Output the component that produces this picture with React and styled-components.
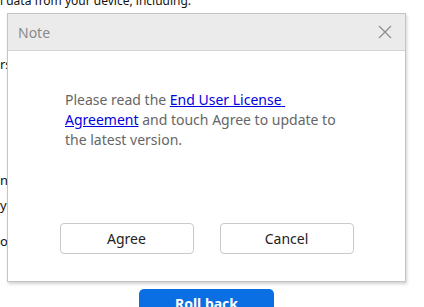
import React from "react";
import styled, { createGlobalStyle } from "styled-components";

const GlobalStyle = createGlobalStyle`
  html, body {
    margin: 0;
    padding: 0;
    background: #ffffff;
  }
  body {
    font-family: "Noto Sans", "Liberation Sans", sans-serif;
    width: 424px;
    height: 307px;
    overflow: hidden;
  }
`;

const Page = styled.div`
  position: relative;
  width: 424px;
  height: 307px;
  overflow: hidden;
  background: #fff;
`;

const BackText = styled.div`
  display: flex;
  flex-direction: column;
  font-size: 13px;
  color: #111;
  line-height: 16px;
`;

const TopLine = styled.div`
  margin-top: -7px;
  font-size: 12px;
  white-space: nowrap;
`;

const SideLine = styled.div`
  margin-top: ${(p) => p.gap}px;
  white-space: nowrap;
`;

const RollBack = styled.button`
  position: absolute;
  left: 139px;
  top: 289px;
  width: 135px;
  height: 34px;
  border: none;
  border-radius: 5px;
  background: #0a6fe2;
  color: #fff;
  font-family: "Noto Sans", "Liberation Sans", sans-serif;
  font-weight: 700;
  font-size: 14px;
  padding: 0;
  padding-top: 5px;
  display: flex;
  justify-content: center;
  align-items: flex-start;
`;

const Dialog = styled.div`
  position: absolute;
  left: 7px;
  top: 13px;
  width: 397px;
  height: 267px;
  border: 1px solid #c4c4c4;
  background: #fff;
  box-shadow: 1px 2px 3px rgba(0, 0, 0, 0.18);
  display: flex;
  flex-direction: column;
`;

const Header = styled.div`
  height: 36px;
  background: #ebebeb;
  border-bottom: 1px solid #d4d4d4;
  display: flex;
  align-items: center;
  justify-content: space-between;
  padding: 0 13px 0 10px;
`;

const Title = styled.div`
  font-size: 14px;
  color: #8a8a8a;
`;

const Close = styled.button`
  width: 14px;
  height: 14px;
  padding: 0;
  border: none;
  background: none;
  display: flex;
`;

const Body = styled.div`
  flex: 1;
  padding: 39px 20px 0 57px;
`;

const Message = styled.p`
  margin: 0;
  font-size: 14px;
  line-height: 20px;
  color: #666;
`;

const Link = styled.a`
  color: #0000e0;
  text-decoration: underline;
`;

const Actions = styled.div`
  display: flex;
  justify-content: center;
  gap: 26px;
  padding-bottom: 27px;
`;

const Btn = styled.button`
  width: 134px;
  height: 31px;
  border: 1px solid #c9c9c9;
  border-radius: 4px;
  background: #fff;
  font-family: "Noto Sans", "Liberation Sans", sans-serif;
  font-size: 14px;
  color: #222;
  padding: 0;
`;

export default function App() {
  return (
    <Page>
      <GlobalStyle />
      <BackText>
        <TopLine>l data from your device, including:</TopLine>
        <SideLine gap={47}>rs</SideLine>
        <SideLine gap={100}>n</SideLine>
        <SideLine gap={9}>ys</SideLine>
        <SideLine gap={20}>o</SideLine>
      </BackText>
      <RollBack>Roll back</RollBack>
      <Dialog>
        <Header>
          <Title>Note</Title>
          <Close aria-label="Close">
            <svg width="14" height="14" viewBox="0 0 14 14">
              <path d="M1 1 L13 13 M13 1 L1 13" stroke="#8c8c8c" strokeWidth="1.2" fill="none" />
            </svg>
          </Close>
        </Header>
        <Body>
          <Message>
            Please read the <Link href="#">End User License{"\u00a0"}</Link>
            <br />
            <Link href="#">Agreement</Link> and touch Agree to update to
            <br />
            the latest version.
          </Message>
        </Body>
        <Actions>
          <Btn>Agree</Btn>
          <Btn>Cancel</Btn>
        </Actions>
      </Dialog>
    </Page>
  );
}
